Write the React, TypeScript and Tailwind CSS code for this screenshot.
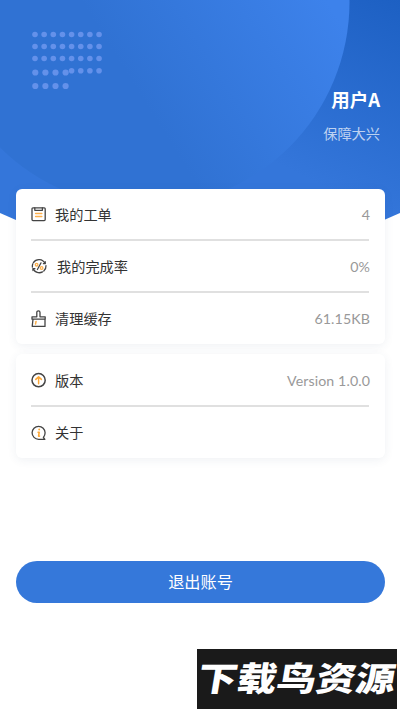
import React from 'react';

interface RowProps {
  icon: React.ReactNode;
  label: string;
  value?: string;
  wide?: boolean;
}

const DOT_ROWS = [34.5, 46.5, 58.5];

const HeaderArt = () => (
  <svg className="absolute left-0 top-0" width="400" height="230" viewBox="0 0 400 230">
    <defs>
      <linearGradient id="base" gradientUnits="userSpaceOnUse" x1="400" y1="0" x2="310" y2="180">
        <stop offset="0" stopColor="#1d60c3" />
        <stop offset="1" stopColor="#3476da" />
      </linearGradient>
      <linearGradient id="disc" gradientUnits="userSpaceOnUse" x1="123" y1="68" x2="300" y2="-43">
        <stop offset="0" stopColor="#3072d3" />
        <stop offset="1" stopColor="#3d82eb" />
      </linearGradient>
    </defs>
    <path d="M0 0H400V213L384 220L200 228L16 220L0 213Z" fill="url(#base)" />
    <circle cx="144.5" cy="2" r="205" fill="url(#disc)" />
    <g fill="#6491ea">
      {DOT_ROWS.map((y) =>
        Array.from({ length: 8 }, (_, i) => <circle key={`${y}-${i}`} cx={35 + i * 9.15} cy={y} r="2.8" />)
      )}
      {[4, 5, 6, 7].map((i) => <circle key={i} cx={35 + i * 9.15} cy="70.8" r="2.8" />)}
      {[72.5, 86].map((y) =>
        [0, 1, 2, 3].map((i) => <circle key={`${y}-${i}`} cx={35.3 + i * 10.1} cy={y} r="3.1" />)
      )}
    </g>
  </svg>
);

const iconProps = {
  width: 16,
  height: 18,
  viewBox: '0 0 16 18',
  fill: 'none',
  stroke: '#444',
  strokeWidth: 1.3,
  strokeLinecap: 'round' as const,
  strokeLinejoin: 'round' as const,
};

const OrderIcon = () => (
  <svg {...iconProps}>
    <path d="M2 1.8h11.2q1 0 1 1v10.8q0 1-1 1H2q-1 0-1-1V2.8q0-1 1-1Z" />
    <path d="M3.8 1.8v2.5h7.6V1.8" />
    <path d="M4.6 7.5h6.2M4.6 10.5h6.2" stroke="#fdb04c" strokeWidth="1.5" />
  </svg>
);

const RateIcon = () => (
  <svg {...iconProps}>
    <path d="M2.4 4.6A6.7 6.7 0 0 1 14 5.4M15 7.6A6.7 6.7 0 0 1 12.8 13M11.5 13.9A6.7 6.7 0 0 1 2.2 10.9M1.4 9.2A6.7 6.7 0 0 1 1.8 5.8" />
    <path d="M14.2 3.7v2h-1.8M2 12.6v-1.9h1.9" />
    <path d="M10 4.9L6.4 11.5" strokeWidth="1.2" />
    <circle cx="5.6" cy="6.7" r="1.3" stroke="#fdb04c" />
    <circle cx="10.6" cy="10" r="1.3" stroke="#fdb04c" />
  </svg>
);

const CleanIcon = () => (
  <svg {...iconProps}>
    <path d="M1 9.2V6.8h4.8V2.4a1.6 1.6 0 0 1 3.2 0v4.4h5.2v2.4ZM2 9.2L1.2 16.4h12.8V9.2" />
    <path d="M5.1 11.5l-.6 2.5" stroke="#fdb04c" strokeWidth="1.5" />
  </svg>
);

const VersionIcon = () => (
  <svg {...iconProps}>
    <circle cx="7.6" cy="8.2" r="6.6" strokeWidth="1.5" />
    <path d="M7.6 11.7V5.2M4.8 7.4l2.8-2.7L10.4 7.4" stroke="#fda736" strokeWidth="1.5" />
  </svg>
);

const AboutIcon = () => (
  <svg {...iconProps}>
    <path d="M13.9 15.3H7.6A6.5 6.5 0 1 1 14.1 8.8q0 2.6-1.7 4.7Z" />
    <path d="M7.1 8.2h1.1l-.6 3.9h.9" stroke="#fda736" strokeWidth="1.6" />
    <path d="M8.2 5.5v.1" stroke="#fda736" strokeWidth="1.9" />
  </svg>
);

const Row: React.FC<RowProps> = ({ icon, label, value, wide }) => (
  <div className="flex h-[52px] items-center text-[14.2px]">
    <span className={`shrink-0 ${wide ? 'mr-[10px]' : 'mr-2'}`}>{icon}</span>
    <span className="text-[#333]">{label}</span>
    {value && <span className="ml-auto font-[Lato,sans-serif] text-[14.2px] tracking-[0.1px] text-[#999]">{value}</span>}
  </div>
);

const Card: React.FC<{ children: React.ReactNode; className: string }> = ({ children, className }) => (
  <div className={`relative mx-4 w-[369px] rounded-md bg-white px-[15px] shadow-[0_2px_10px_rgba(50,80,120,0.08)] ${className}`}>
    {children}
  </div>
);

const Divider = () => <div className="-mt-[2px] h-[2px] w-[338px] bg-[#e0e0e0]" />;

export default function App() {
  return (
    <div className="relative flex h-[710px] w-[400px] flex-col overflow-hidden bg-white font-['Noto_Sans','Noto_Sans_CJK_SC',sans-serif]">
      <HeaderArt />

      <header className="relative flex h-[189px] shrink-0 flex-col items-end pr-5 pt-[87px] text-white">
        <h1 className="font-['Noto_Sans_CJK_SC',sans-serif] text-[18.5px] font-bold leading-6">用户A</h1>
        <p className="mt-3 text-[14.2px] leading-[22px] text-white/70">保障大兴</p>
      </header>

      <Card className="h-[155px]">
        <Row icon={<OrderIcon />} label="我的工单" value="4" />
        <Divider />
        <Row icon={<RateIcon />} label="我的完成率" value="0%" wide />
        <Divider />
        <Row icon={<CleanIcon />} label="清理缓存" value="61.15KB" />
      </Card>

      <Card className="mt-[10px] h-[104px] pt-px">
        <Row icon={<VersionIcon />} label="版本" value="Version 1.0.0" />
        <Divider />
        <Row icon={<AboutIcon />} label="关于" />
      </Card>

      <button className="mx-4 mt-[103px] h-[42px] w-[369px] shrink-0 rounded-full bg-[#3578da] pt-px text-[16.2px] text-white">
        退出账号
      </button>

      <div className="absolute left-[197px] top-[649px] flex h-[60px] w-[200px] items-center justify-center bg-[#1a1a1a]">
        <span className="-skew-x-8 scale-y-85 whitespace-nowrap text-[39.5px] font-black leading-none text-white">下载鸟资源</span>
      </div>
    </div>
  );
}
